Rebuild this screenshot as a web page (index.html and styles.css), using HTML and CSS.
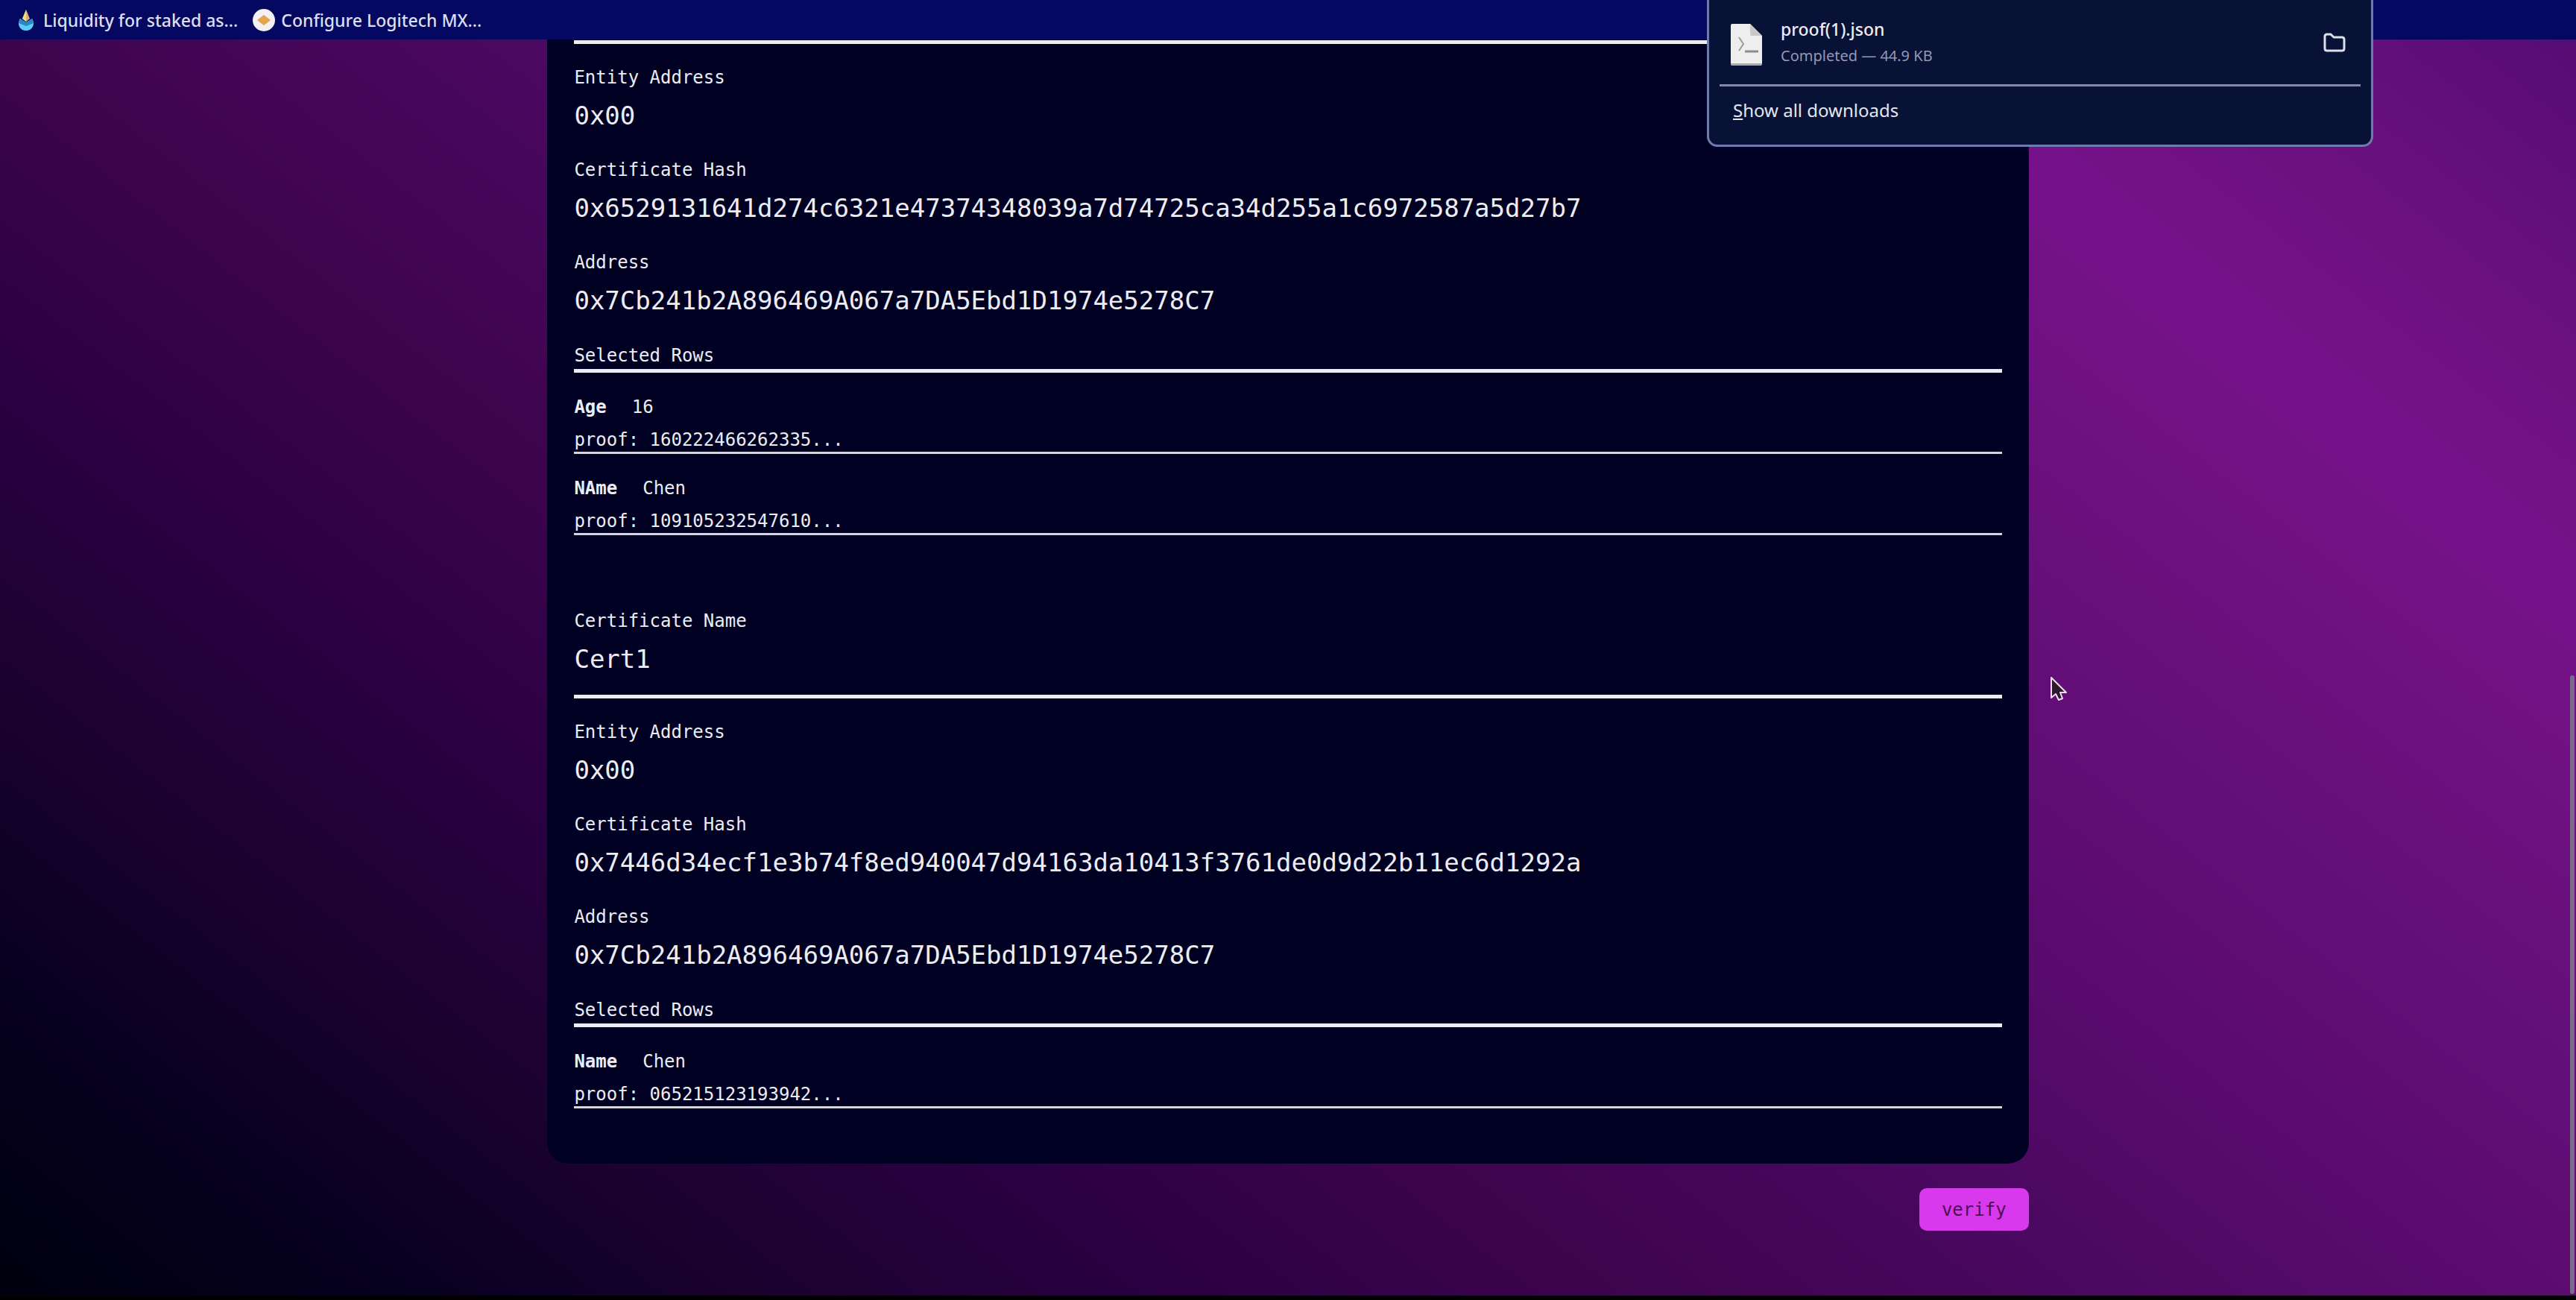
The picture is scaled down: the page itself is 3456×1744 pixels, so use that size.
FILE: index.html
```html
<!DOCTYPE html>
<html lang="en">
<head>
<meta charset="utf-8">
<title>Certificate proof</title>
<link rel="stylesheet" href="styles.css">
</head>
<body>
<nav class="bookmarks" aria-label="Bookmarks">
  <a class="bookmark" href="#">
    <svg class="favicon" viewBox="0 0 30 30" aria-hidden="true">
      <path d="M15 1 L20 13 L15 17 L10 13 Z" fill="#e8a58a"/>
      <path d="M15 1 L15 17 L10 13 Z" fill="#e9e27a"/>
      <path d="M7 13 L15 18 L23 13 C28 21 23 29 15 29 C7 29 2 21 7 13 Z" fill="#5ccdf6"/>
      <path d="M7 13 L15 18 L23 13 L25 19 L15 23 L5 19 Z" fill="#2f86c4"/>
    </svg>
    <span>Liquidity for staked as...</span>
  </a>
  <a class="bookmark" href="#">
    <svg class="favicon" viewBox="0 0 30 30" aria-hidden="true">
      <circle cx="15" cy="15" r="15" fill="#f3f0f4"/>
      <path d="M15 8 L19 11 L24 15 L19 19 L15 22 L11 19 L6 15 L11 11 Z" fill="#e3a64f"/>
    </svg>
    <span>Configure Logitech MX...</span>
  </a>
</nav>

<main class="page">
  <div class="content">
    <div class="card">
      <section class="certificate">
        <div class="rule"></div>
        <dl class="fields">
          <div class="field"><dt>Entity Address</dt><dd>0x00</dd></div>
          <div class="field"><dt>Certificate Hash</dt><dd>0x6529131641d274c6321e47374348039a7d74725ca34d255a1c6972587a5d27b7</dd></div>
          <div class="field"><dt>Address</dt><dd>0x7Cb241b2A896469A067a7DA5Ebd1D1974e5278C7</dd></div>
        </dl>
        <h3 class="rows-title">Selected Rows</h3>
        <ul class="rows">
          <li class="row"><p class="pair"><b>Age</b><span>16</span></p><p>proof: 160222466262335...</p></li>
          <li class="row"><p class="pair"><b>NAme</b><span>Chen</span></p><p>proof: 109105232547610...</p></li>
        </ul>
      </section>
      <section class="certificate">
        <dl class="heading">
          <div class="field"><dt>Certificate Name</dt><dd>Cert1</dd></div>
        </dl>
        <div class="rule"></div>
        <dl class="fields">
          <div class="field"><dt>Entity Address</dt><dd>0x00</dd></div>
          <div class="field"><dt>Certificate Hash</dt><dd>0x7446d34ecf1e3b74f8ed940047d94163da10413f3761de0d9d22b11ec6d1292a</dd></div>
          <div class="field"><dt>Address</dt><dd>0x7Cb241b2A896469A067a7DA5Ebd1D1974e5278C7</dd></div>
        </dl>
        <h3 class="rows-title">Selected Rows</h3>
        <ul class="rows">
          <li class="row"><p class="pair"><b>Name</b><span>Chen</span></p><p>proof: 065215123193942...</p></li>
        </ul>
      </section>
    </div>
    <button class="verify" type="button">verify</button>
  </div>
</main>

<aside class="downloads" aria-label="Downloads">
  <div class="download">
    <svg class="file-icon" viewBox="0 0 44 58" aria-hidden="true">
      <path d="M3 1 H27 L43 17 V54 Q43 57 40 57 H3 Q1 57 1 54 V3 Q1 1 3 1 Z" fill="#eeeeef"/>
      <path d="M1 54 H43 Q43 57 40 57 H3 Q1 57 1 54 Z" fill="#a9a9ad"/>
      <path d="M27 1 V15 Q27 17 29 17 H43 Z" fill="#c9c9cc"/>
      <path d="M12 19 L18 28 L12 37" fill="none" stroke="#9a9a9e" stroke-width="2"/>
      <path d="M20 38 H38" stroke="#8d8d91" stroke-width="3"/>
    </svg>
    <div class="download-text">
      <p class="file-name">proof(1).json</p>
      <p class="file-status">Completed — 44.9 KB</p>
    </div>
    <button class="folder" type="button" aria-label="Open folder">
      <svg viewBox="0 0 30 26" aria-hidden="true">
        <path d="M2 5 Q2 2 5 2 H10 L14 6 H25 Q28 6 28 9 V21 Q28 24 25 24 H5 Q2 24 2 21 Z" fill="none" stroke="#dcdee8" stroke-width="3" stroke-linejoin="round"/>
      </svg>
    </button>
  </div>
  <a class="show-all" href="#"><u>S</u>how all downloads</a>
</aside>

<div class="scroll-thumb"></div>
<svg class="pointer" viewBox="0 0 24 34" aria-hidden="true">
  <path d="M2 2 V29 L8 24 L12 32 L17 30 L14 22 H22 Z" fill="#2a1a2c" stroke="#efdcf0" stroke-width="2" stroke-linejoin="round"/>
</svg>
</body>
</html>
```
FILE: styles.css
```css
* { box-sizing: border-box; }

body {
  margin: 0;
  min-height: 100vh;
  display: flex;
  flex-direction: column;
  border-bottom: 6px solid #000;
  background: #000;
  color: #ececf4;
  font: 24px/32px "DejaVu Sans Mono", monospace;
}

p, dl, dd, ul, h3 { margin: 0; padding: 0; }

.bookmarks {
  display: flex;
  gap: 20px;
  height: 53px;
  padding: 0 20px;
  align-items: center;
  background: #040860;
}

.bookmark {
  display: flex;
  align-items: center;
  gap: 8px;
  color: #dcdff2;
  font: 500 23px/32px "Noto Sans", sans-serif;
  text-decoration: none;
}

.favicon { width: 30px; height: 30px; }

.page {
  flex: 1;
  background: linear-gradient(38deg, #00000e 0%, #070020 10%, #1c0230 19%, #2a0042 28%, #3e044e 39%, #4a0860 50%, #5c0c70 61%, #68107c 72%, #76128a 83%, #68107e 92%, #560c74 100%);
}

.content {
  display: flex;
  flex-direction: column;
  align-items: flex-end;
  gap: 33px;
  width: 57.5%;
  margin: 0 auto;
}

.card {
  width: 100%;
  padding: 1px 36px 74px;
  border-radius: 0 0 28px 28px;
  background: #000022;
}

.certificate + .certificate { margin-top: 99px; }

.rule { height: 5px; background: #ececf4; }

.fields {
  display: grid;
  gap: 34px;
  padding: 29px 0 35px;
}

.heading { padding-bottom: 25px; }

.field { display: grid; gap: 12px; }

.field dd { font-size: 34px; line-height: 46px; }

.rows-title {
  padding-bottom: 2px;
  border-bottom: 5px solid #ececf4;
  font-size: 24px;
  font-weight: 400;
}

.rows { list-style: none; }

.row {
  display: grid;
  gap: 12px;
  padding-top: 30px;
  border-bottom: 3px solid #d4d4de;
}

.pair { display: flex; gap: 34px; }

.verify {
  height: 57px;
  padding: 0 30px;
  border: 0;
  border-radius: 10px;
  background: #d939ec;
  color: #4a1058;
  font: inherit;
}

/* Browser download panel, floating over the page */
.downloads {
  position: absolute;
  top: 0;
  right: 272px;
  width: 894px;
  height: 197px;
  padding: 0 14px;
  border: 3px solid #6f7bae;
  border-top: 0;
  border-radius: 0 0 14px 14px;
  background: #081236;
  font-family: "Noto Sans", sans-serif;
}

.download {
  display: flex;
  align-items: center;
  height: 116px;
  padding: 0 20px 0 14px;
  border-bottom: 3px solid #8289ad;
}

.file-icon { width: 44px; height: 58px; margin-top: 6px; }

.download-text { flex: 1; padding-left: 24px; }

.file-name { font-size: 23px; font-weight: 500; line-height: 36px; }

.file-status { color: #9298b4; font-size: 20px; line-height: 36px; }

.folder {
  width: 30px;
  height: 26px;
  padding: 0;
  border: 0;
  background: none;
}

.folder svg { display: block; }

.show-all {
  display: block;
  padding: 14px 18px;
  color: #e4e6ee;
  font-size: 24px;
  line-height: 36px;
  text-decoration: none;
}

.scroll-thumb {
  position: absolute;
  right: 2px;
  top: 906px;
  bottom: 8px;
  width: 6px;
  border-radius: 3px;
  background: #7c6a8c;
}

.pointer {
  position: absolute;
  left: 2750px;
  top: 906px;
  width: 24px;
  height: 36px;
}
```
